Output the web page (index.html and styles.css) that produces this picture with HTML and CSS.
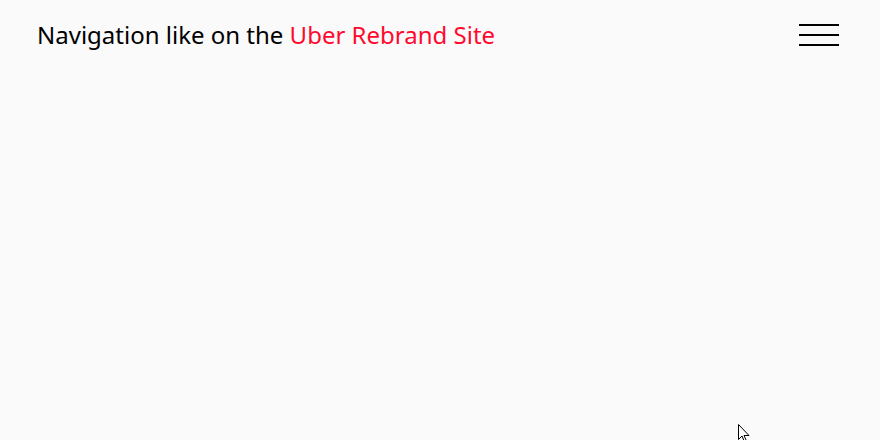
FILE: index.html
```html
<!DOCTYPE html>
<html lang="en">
<head>
<meta charset="utf-8">
<title>Navigation like on the Uber Rebrand Site</title>
<link rel="stylesheet" href="styles.css">
</head>
<body>
<header class="header">
  <h1 class="title">Navigation like on the <span class="accent">Uber Rebrand Site</span></h1>
  <button class="burger" aria-label="Menu">
    <span class="bar"></span>
    <span class="bar"></span>
    <span class="bar"></span>
  </button>
</header>
<svg class="cursor" width="13" height="20" viewBox="0 0 13 20" aria-hidden="true">
  <path d="M0.5 0.5 L0.5 15.5 L4 12 L6.5 18 L8.5 17 L6 11.5 L11 11.5 Z" fill="#fff" stroke="#000" stroke-width="1"/>
</svg>
</body>
</html>
```
FILE: styles.css
```css
html, body {
  margin: 0;
  padding: 0;
  background: #fafafa;
  height: 100%;
  overflow: hidden;
}
body {
  font-family: "Noto Sans", "Open Sans", sans-serif;
  color: #000;
  position: relative;
}
.header {
  display: flex;
  align-items: center;
  justify-content: space-between;
  padding: 15px 41px 15px 37px;
  height: 40px;
}
.title {
  margin: 0;
  font-size: 24px;
  font-weight: 400;
  line-height: 40px;
  color: #000;
}
.accent {
  color: #ff0a2e;
}
.burger {
  display: flex;
  flex-direction: column;
  gap: 8px;
  padding: 0;
  border: 0;
  background: none;
  width: 40px;
}
.bar {
  display: block;
  width: 40px;
  height: 2px;
  background: #000;
}
.cursor {
  position: absolute;
  left: 738px;
  top: 424px;
}
```
